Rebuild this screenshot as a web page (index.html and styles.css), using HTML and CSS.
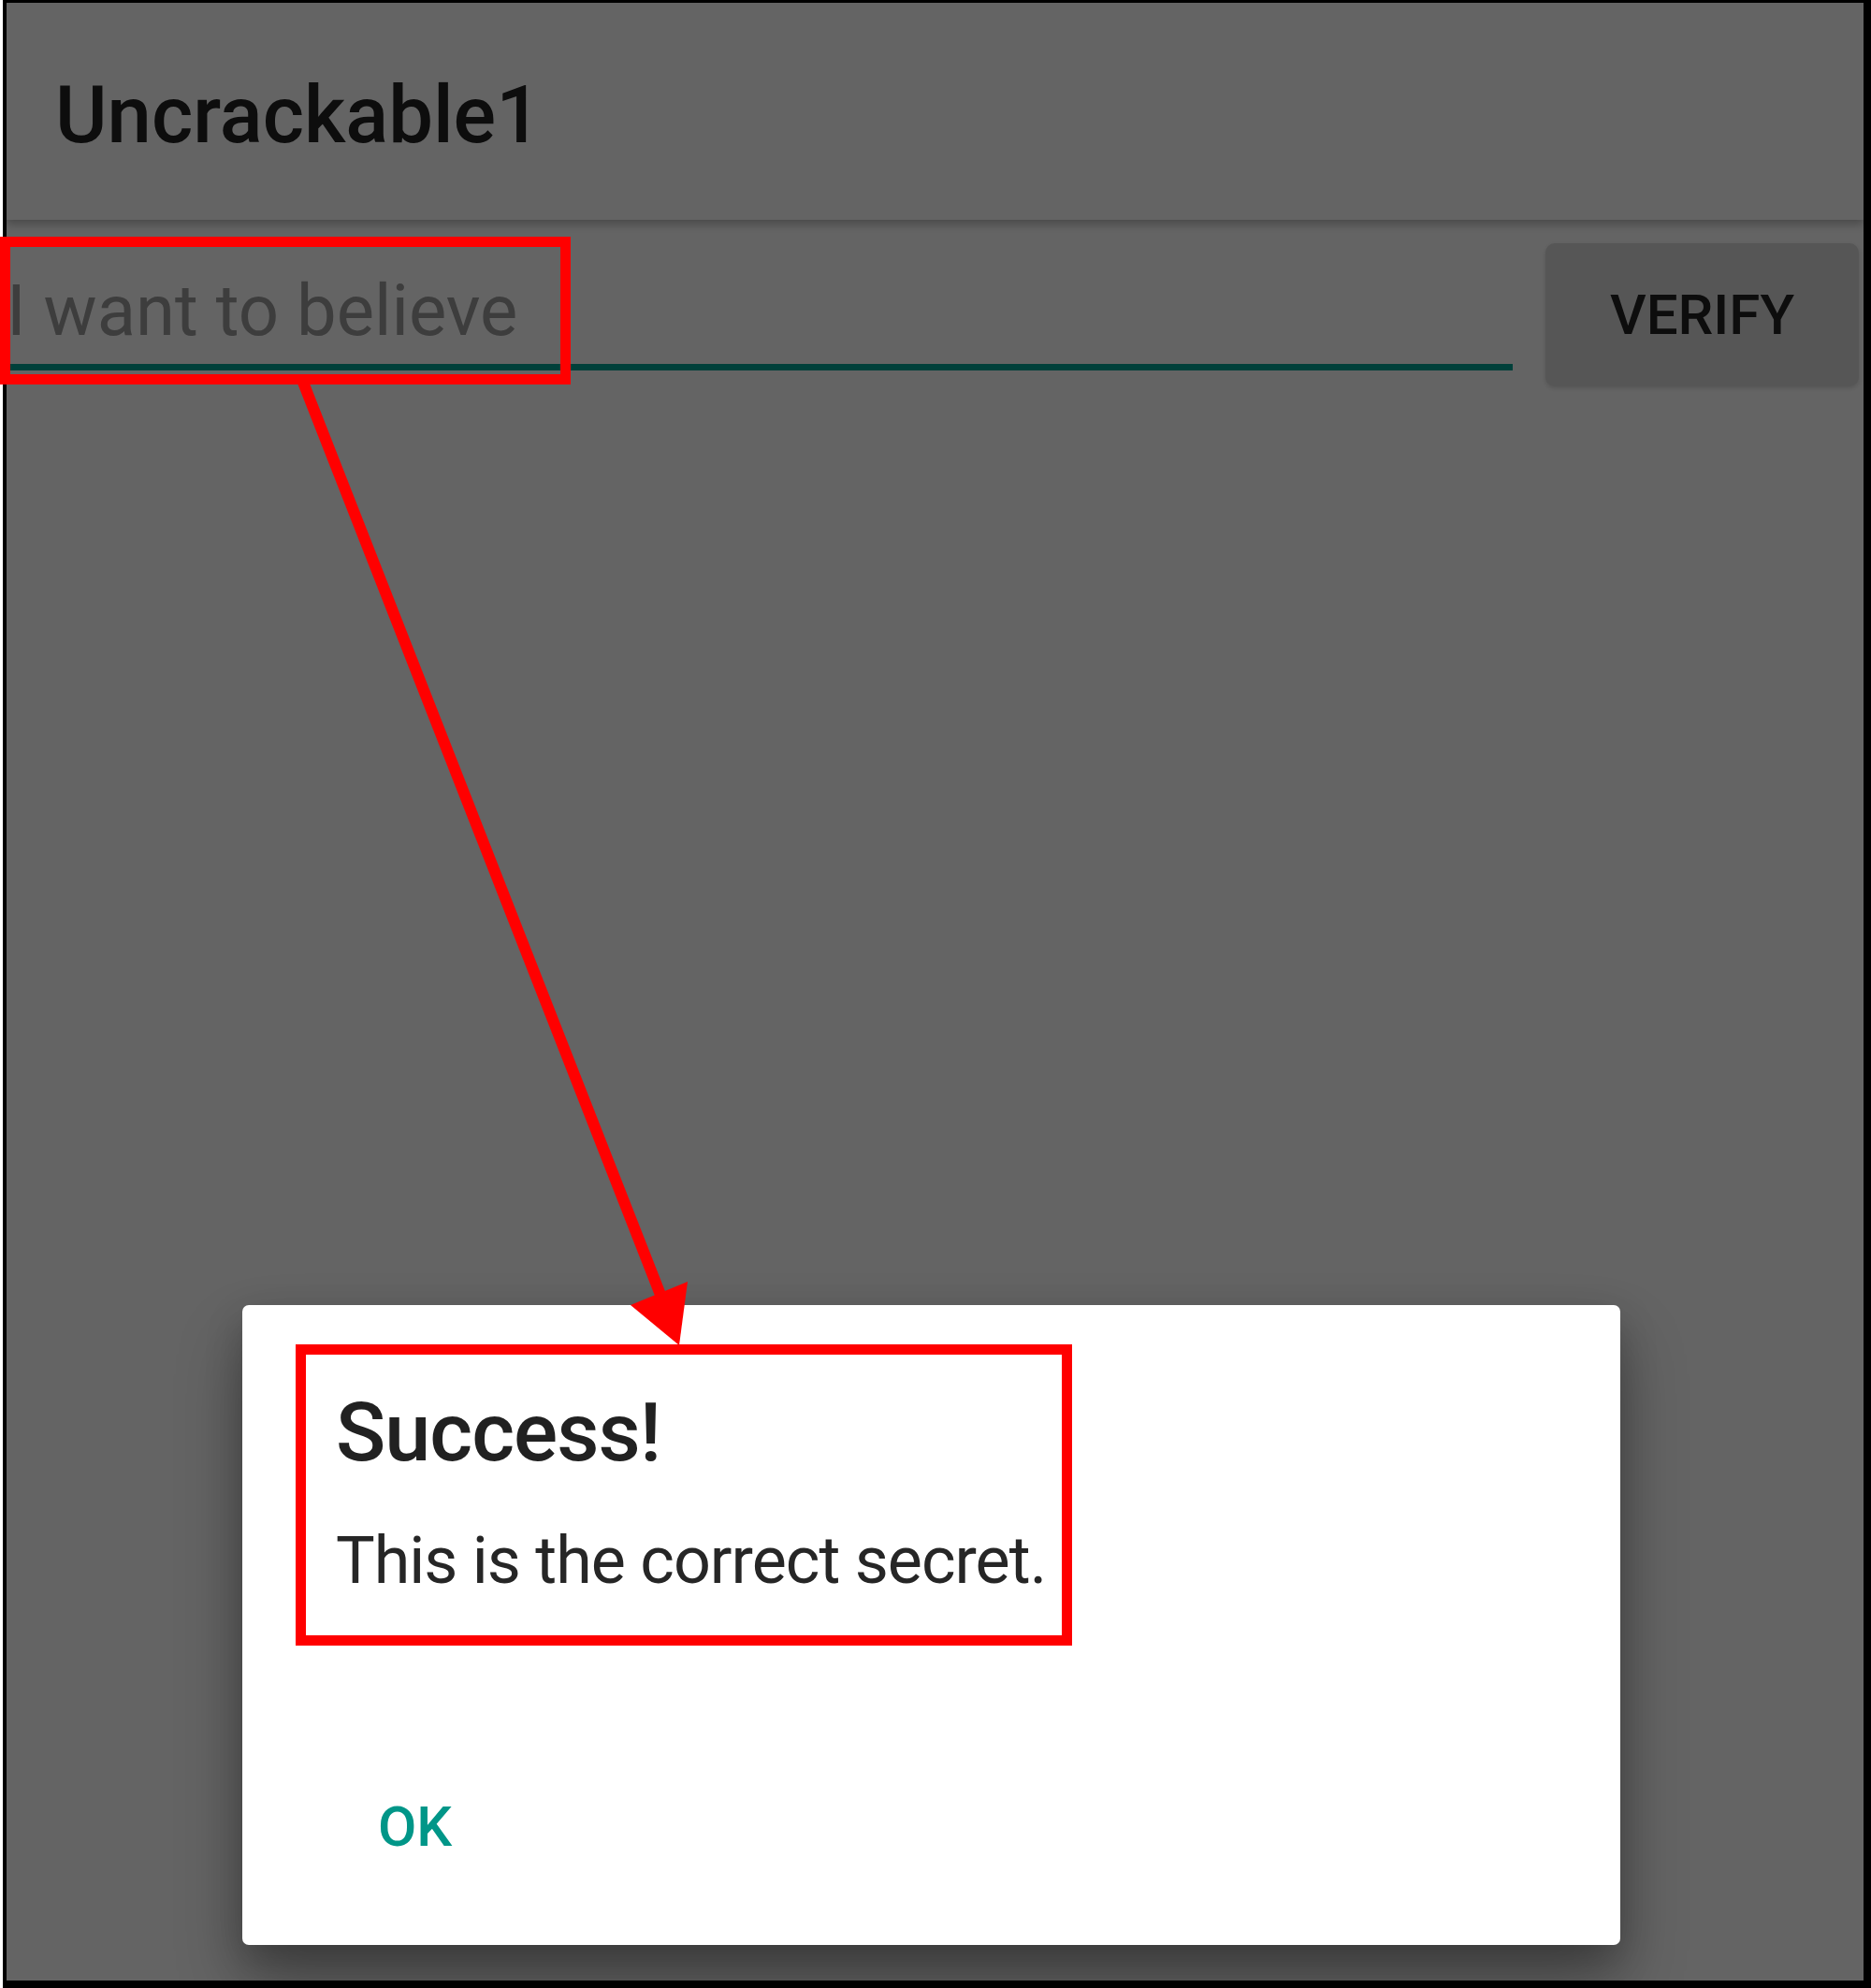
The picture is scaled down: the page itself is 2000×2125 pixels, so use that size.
FILE: index.html
```html
<!DOCTYPE html>
<html lang="en">
<head>
    <meta charset="UTF-8">
    <meta name="viewport" content="width=device-width, initial-scale=1.0">
    <title>Uncrackable1</title>
    <link rel="stylesheet" href="styles.css">
</head>
<body>
    <div class="frame">
        <header class="toolbar">
            <h1 class="title">Uncrackable1</h1>
        </header>
        <div class="verify-row">
            <input class="secret" type="text" value="I want to believe">
            <button class="verify" type="button">VERIFY</button>
        </div>
        <div class="scrim">
            <div class="dialog">
                <h2 class="dialog-title">Success!</h2>
                <p class="dialog-message">This is the correct secret.</p>
                <button class="dialog-ok" type="button">OK</button>
            </div>
        </div>
    </div>

    <svg class="marks" width="2000" height="2125" viewBox="0 0 2000 2125">
        <rect x="5.5" y="258.5" width="599" height="147" fill="none" stroke="#f00" stroke-width="11"/>
        <rect x="321.5" y="1442.5" width="819" height="311" fill="none" stroke="#f00" stroke-width="11"/>
        <line x1="323" y1="406" x2="706" y2="1384" stroke="#f00" stroke-width="12"/>
        <polygon points="674,1395 735,1370 726,1438" fill="#f00"/>
    </svg>
</body>
</html>
```

FILE: styles.css
```css
body {
  margin: 0;
  background-color: #fff;
  font-family: Roboto, "Noto Sans", sans-serif;
}

.frame {
  position: relative;
  margin-left: 3px;
  height: 2114px;
  border-style: solid;
  border-color: #000;
  border-width: 3px 8px 8px 4px;
  background-color: #fafafa;
  overflow: hidden;
}

.toolbar {
  position: relative;
  z-index: 1;
  height: 224px;
  padding: 8px 0 0 52px;
  background-color: #fafafa;
  box-shadow: 0 4px 10px rgba(0, 0, 0, 0.3);
}

.title {
  margin: 0;
  font-size: 85px;
  font-weight: 500;
  line-height: 224px;
  color: #212121;
}

.verify-row {
  display: flex;
  align-items: flex-start;
  padding-right: 5px;
}

.secret {
  flex: 1;
  min-width: 0;
  margin-top: 40px;
  height: 114px;
  padding: 0;
  border: none;
  border-bottom: 7px solid #00a091;
  background: transparent;
  font-family: Roboto, sans-serif;
  font-size: 76px;
  color: #989898;
  outline: none;
}

.verify {
  margin: 25px 0 0 35px;
  width: 335px;
  height: 153px;
  border: none;
  border-radius: 10px;
  background-color: #d6d6d6;
  box-shadow: 0 2px 5px rgba(0, 0, 0, 0.15);
  font-family: Roboto, sans-serif;
  font-size: 60px;
  font-weight: 500;
  color: #212121;
}

.scrim {
  position: absolute;
  z-index: 2;
  top: 0;
  left: 0;
  right: 0;
  bottom: 0;
  display: flex;
  align-items: flex-end;
  padding: 0 0 38px 252px;
  background-color: rgba(0, 0, 0, 0.6);
}

.dialog {
  width: 1273px;
  padding: 84px 100px 91px;
  border-radius: 7px;
  background-color: #fff;
  box-shadow: 0 40px 70px rgba(0, 0, 0, 0.3), 0 16px 40px rgba(0, 0, 0, 0.2);
}

.dialog-title {
  margin: 0;
  font-size: 88px;
  font-weight: 500;
  line-height: 103px;
  letter-spacing: -1px;
  color: #212121;
}

.dialog-message {
  margin: 45px 0 0;
  font-size: 70px;
  line-height: 82px;
  letter-spacing: -1px;
  color: #262626;
}

.dialog-ok {
  display: block;
  margin: 209px 0 0 45px;
  padding: 0;
  border: none;
  background: none;
  font-family: Roboto, sans-serif;
  font-size: 60px;
  font-weight: 500;
  line-height: 70px;
  color: #009688;
}

.marks {
  position: absolute;
  z-index: 3;
  top: 0;
  left: 0;
  pointer-events: none;
}
```
